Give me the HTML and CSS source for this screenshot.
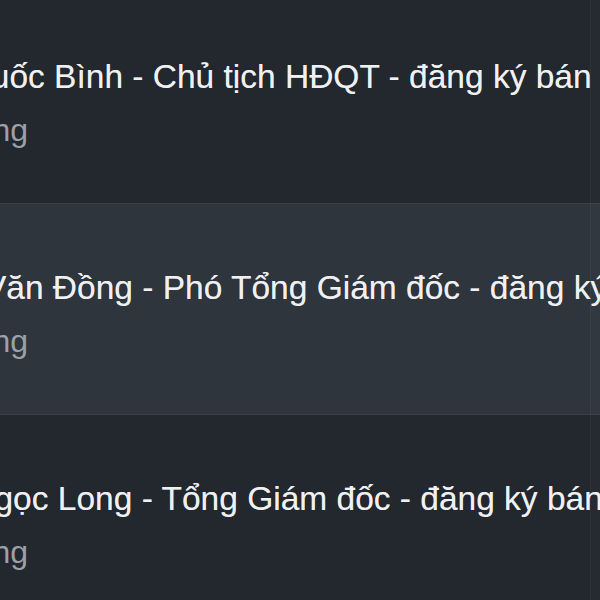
FILE: index.html
```html
<!DOCTYPE html>
<html lang="vi">
<head>
<meta charset="utf-8">
<title>Giao dịch nội bộ</title>
<link rel="stylesheet" href="styles.css">
</head>
<body>
<div class="panel">
  <ul class="feed">
    <li class="item">
      <div class="item-body">
        <p class="title">Bùi Quốc Bình - Chủ tịch HĐQT - đăng ký bán 2.000.000 cổ phiếu</p>
        <p class="meta">Cổ đông</p>
      </div>
    </li>
    <li class="item item-active">
      <div class="item-body">
        <p class="title">Trần Văn Đồng - Phó Tổng Giám đốc - đăng ký bán 500.000 cổ phiếu</p>
        <p class="meta">Cổ đông</p>
      </div>
    </li>
    <li class="item">
      <div class="item-body">
        <p class="title">Mai Ngọc Long - Tổng Giám đốc - đăng ký bán 1.000.000 cổ phiếu</p>
        <p class="meta">Cổ đông</p>
      </div>
    </li>
  </ul>
  <div class="scroll-track"></div>
</div>
</body>
</html>
```

FILE: styles.css
```css
html, body {
  margin: 0;
  padding: 0;
  background: #23272e;
  overflow: hidden;
}

.panel {
  position: relative;
  width: 600px;
  height: 600px;
  overflow: hidden;
  font-family: "Liberation Sans", Arial, sans-serif;
}

.feed {
  list-style: none;
  margin: -7px 0 0 0;
  padding: 0;
}

.item {
  height: 210px;
  background: #23272e;
  border-bottom: 1px solid #3a4048;
  display: flex;
  align-items: center;
  overflow: hidden;
}

.item-active {
  background: #2f353d;
}

.item-body {
  margin-left: -93px;
  padding-top: 11px;
  white-space: nowrap;
}

.title {
  margin: 0;
  font-size: 33.5px;
  line-height: 54px;
  color: #eef0f2;
  text-shadow: 0 0 0.4px rgba(238, 240, 242, 0.6);
}

.meta {
  margin: 0;
  font-size: 32px;
  line-height: 53px;
  color: #9ba1a8;
}

.scroll-track {
  position: absolute;
  top: 0;
  right: 0;
  bottom: 0;
  width: 9px;
  border-left: 1px solid rgba(255, 255, 255, 0.035);
  background: rgba(255, 255, 255, 0.015);
}
```
